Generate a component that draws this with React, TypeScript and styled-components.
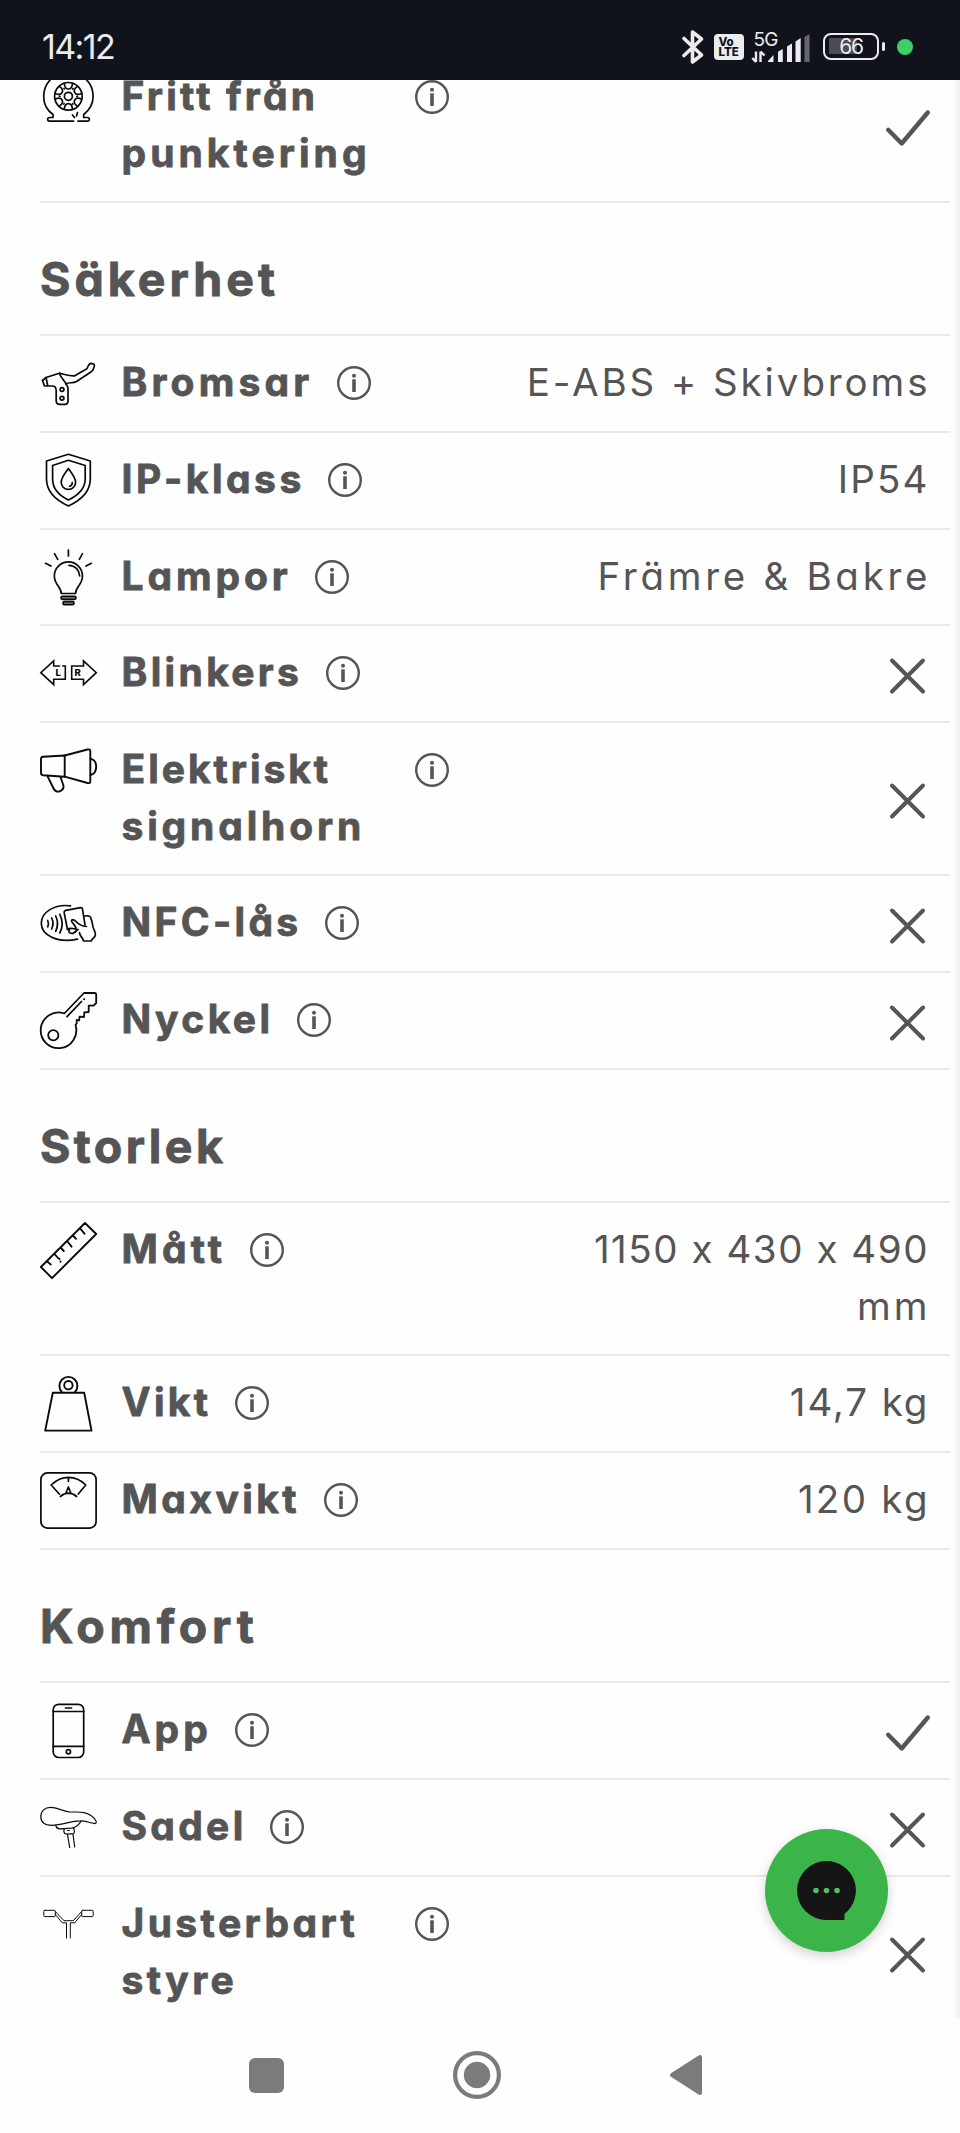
import React from "react";
import styled, { createGlobalStyle } from "styled-components";

const INK = "#555555";
const LINE = "#e9e9e9";
const PAGE = "#fefefe";

const GlobalStyle = createGlobalStyle`
  * { box-sizing: border-box; }
  body {
    margin: 0;
    background: ${PAGE};
    color: ${INK};
    font-family: Inter, "Liberation Sans", sans-serif;
    font-feature-settings: "cv11" 1, "calt" 0;
  }
  svg { display: block; flex: none; overflow: visible; }
`;

const Screen = styled.div`
  position: relative;
  display: flex;
  flex-direction: column;
  width: 960px;
  height: 2133px;
  overflow: hidden;
  background: ${PAGE};
`;

/* ---------- status bar ---------- */

const StatusBar = styled.header`
  flex: none;
  display: flex;
  align-items: center;
  justify-content: space-between;
  height: 80px;
  padding: 13px 47px 0 42px;
  background: #10131b;
  color: #ececee;
`;

const Clock = styled.span`
  font-size: 34px;
  line-height: 40px;
  letter-spacing: -1.6px;
`;

const StatusIcons = styled.div`
  display: flex;
  align-items: center;
`;

const VoLte = styled.div`
  display: flex;
  flex-direction: column;
  justify-content: center;
  width: 30px;
  height: 26px;
  margin: 1px 7px 0 10px;
  padding-left: 4.5px;
  border-radius: 4px;
  background: #ececee;
  color: #10131b;
  font-size: 11.5px;
  font-weight: 800;
  line-height: 10.5px;
`;

const BatteryShell = styled.div`
  display: flex;
  align-items: center;
  justify-content: center;
  width: 56px;
  height: 27px;
  margin-left: 12px;
  border: 2.5px solid #ececee;
  border-radius: 8px;
  background: linear-gradient(#4b4d53, #4b4d53) 4px 3px / 28px 16px no-repeat;
  font-size: 21px;
  font-weight: 400;
  line-height: 22px;
  letter-spacing: -1.2px;
`;

const BatteryTip = styled.div`
  width: 3.5px;
  height: 9px;
  margin-left: 2.5px;
  border-radius: 2px;
  background: #ececee;
`;

const PrivacyDot = styled.div`
  width: 16px;
  height: 16px;
  margin-left: 12px;
  border-radius: 50%;
  background: #3dd068;
`;

/* ---------- specification list ---------- */

const Page = styled.main`
  flex: 1;
  min-height: 0;
  overflow: hidden;
  padding: 0 10px 0 40px;
  background: linear-gradient(to right, rgba(0, 0, 0, 0), rgba(0, 0, 0, 0.055)) right / 9px 100% no-repeat;
`;

const Scrolled = styled.div`
  margin-top: -30px;
`;

const SectionTitle = styled.h2<{ $height: number; $tracking: number }>`
  display: flex;
  align-items: center;
  height: ${(p) => p.$height}px;
  margin: 0;
  padding: 21px 0 0 0;
  border-bottom: 2px solid ${LINE};
  font-size: 46.5px;
  font-weight: 700;
  letter-spacing: ${(p) => p.$tracking}px;
  -webkit-text-stroke: 0.9px ${INK};
`;

const SpecRow = styled.div<{ $height: number }>`
  display: flex;
  justify-content: space-between;
  height: ${(p) => p.$height}px;
  border-bottom: 2px solid ${LINE};
`;

const SpecName = styled.div`
  flex: none;
  display: flex;
  align-items: flex-start;
  width: 409px;
  padding-top: 19px;
`;

const Label = styled.span`
  margin: -2px 23.5px 0 24.5px;
  font-size: 39px;
  font-weight: 700;
  line-height: 57px;
  -webkit-text-stroke: 0.8px ${INK};
`;

const Tracked = styled.span<{ $tracking: number }>`
  letter-spacing: ${(p) => p.$tracking}px;
`;

const InfoButton = styled.span`
  flex: none;
  display: flex;
  align-items: center;
  height: 56px;
`;

const TextValue = styled.span`
  display: flex;
  flex-direction: column;
  align-items: flex-end;
  padding: 18px 22.5px 0 0;
  font-size: 38.5px;
  line-height: 57px;
  white-space: nowrap;
`;

const ValueLine = styled(Tracked)`
  margin-right: ${(p) => -p.$tracking}px;
`;

const MarkValue = styled.span<{ $inset: number }>`
  display: flex;
  align-items: center;
  padding-top: 4px;
  margin-right: ${(p) => p.$inset}px;
`;

/* ---------- overlays and navigation ---------- */

const ChatButton = styled.button`
  position: absolute;
  right: 72px;
  bottom: 181px;
  display: flex;
  align-items: center;
  justify-content: center;
  width: 123px;
  height: 123px;
  padding: 0;
  border: 0;
  border-radius: 50%;
  background: #3bb54a;
  box-shadow: 0 4px 12px rgba(0, 0, 0, 0.18);
`;

const NavBar = styled.nav`
  flex: none;
  display: flex;
  align-items: center;
  justify-content: space-between;
  height: 115px;
  padding: 0 257px 1px 249px;
  background: ${PAGE};
`;

/* ---------- drawings ---------- */

const Glyph = ({ children, weight = 1.7 }: { children: React.ReactNode; weight?: number }) => (
  <svg width="57" height="57" viewBox="0 0 57 57" fill="none" stroke="#0a0a0a" strokeWidth={weight} strokeLinecap="round" strokeLinejoin="round">
    {children}
  </svg>
);

const spokes = [0, 60, 120, 180, 240, 300];

const icons: Record<string, React.ReactNode> = {
  tire: (
    <Glyph>
      <path d="M13 45.5C6.500 41 3.700 34.500 3.700 27.500a24.700 24.700 0 0 1 49.400 0C53.100 34.500 49.500 41 43.700 45.500V48.500H47.500a1.800 1.800 0 0 1 0 3.700H38M13 45.500V48.500H9.500a1.800 1.800 0 0 0 0 3.700H33.500M32.500 46l2 2.500M37.500 43.500l-1 3.500" />
      <circle cx="28.400" cy="27.300" r="13.800" />
      <circle cx="28.400" cy="27.300" r="4" />
      {spokes.map((a) => (
        <g key={a} transform={`rotate(${a} 28.400 27.300)`}>
          <path d="M24.300 14.500c.3 3.500 1.500 5.500 4.100 5.500s3.800-2 4.100-5.500" />
          <path d="M32.700 20l.3-.5" />
        </g>
      ))}
    </Glyph>
  ),
  brake: (
    <Glyph>
      <path d="M2.500 25.500L6 22.500 19.300 18.200c5 1 10 3 15.500 2.600L46.500 14c1.800-1.600 1.500-5.500 4.500-5.700 3.500 0 3.900 1.700 3 4.200-.6 2.400-1.300 3.500-3.500 4.800L36.500 26.500c-3.500 2-7 .5-10.800 2.300" />
      <path d="M19.300 18.500c2 5 7.700 9.500 8.700 14.500V46c0 2.300-1 3.300-3 3.300H19.500c-2.300 0-3.300-1-3.300-3.300V35.500C16 32.500 15 31 12.500 31H4.500L2.500 25.500M6 22.500L7.800 31" />
      <circle cx="22" cy="34.500" r="1.900" />
      <circle cx="22" cy="43.300" r="1.900" />
    </Glyph>
  ),
  shield: (
    <Glyph>
      <path d="M28.400 2.300L50.300 9V27c0 13-9 21-21.900 27C15.500 48 6.500 40 6.500 27V9z" />
      <path d="M28.400 8.300L45.200 13.500V27c0 10-6.500 16-16.800 21C18 43 12.600 37 12.600 27V13.500z" />
      <path d="M28.400 16.500c-3 4.500-7.200 8.800-7.200 13.700a7.200 7.200 0 0 0 14.400 0c0-4.900-4.200-9.200-7.200-13.700zM32.300 30.500c0 2-1 3.300-2.800 3.800" />
    </Glyph>
  ),
  bulb: (
    <Glyph>
      <path d="M21.300 44.500C21.300 38 14.300 35.500 14.300 27a14.100 14.100 0 0 1 28.200 0c0 8.500-7 11-7 17.500z" />
      <path d="M29 16.300c6 .2 10.300 4.500 10.700 10.700" />
      <rect x="21" y="47.300" width="15" height="3" rx="1.500" fill="#888" />
      <rect x="23" y="52.700" width="11" height="3" rx="1.500" fill="#888" />
      <path d="M28.400 1v6M14.500 4.700l3.200 5.600M42.500 4.700l-3.200 5.600M5.500 14.300l5.500 2.700M51.300 14.300L46 17" />
    </Glyph>
  ),
  blinker: (
    <Glyph weight={1.6}>
      <path d="M19.500 21H13.700V15.800L.8 27.700l12.900 11.900V34.300H25.300V21H22.700" strokeLinejoin="miter" />
      <path d="M31.700 21H43.500V15.800L56.300 27.700 43.500 39.600V34.300H31.700z" strokeLinejoin="miter" />
      <text x="15.500" y="30.900" fontSize="9.500" fontWeight="800" fill="#0a0a0a" stroke="none">L</text>
      <text x="34.500" y="30.900" fontSize="9.500" fontWeight="800" fill="#0a0a0a" stroke="none">R</text>
    </Glyph>
  ),
  megaphone: (
    <Glyph weight={1.9}>
      <path d="M24.700 13.500L3 14.800C1.500 15 1 15.500 1 17V31c0 1.500.5 2 2 2.200L24.700 34.700z" />
      <path d="M24.700 13.500L47.500 7.500c2-.5 2.800 0 2.800 2V39c0 2-.8 2.500-2.800 2L24.700 34.700" />
      <path d="M50.500 16.700c3.500 1 5.700 4 5.700 8s-2.200 7.300-5.700 8.300M7.700 34.500L13.300 46c1.300 2.800 3.200 4 5.700 3.500 3.500-1 5-3.500 4.300-6.500L20.700 35.500" />
    </Glyph>
  ),
  nfc: (
    <Glyph>
      <path d="M30.500 10.800C14.500 9 1.300 17 1.300 28.300 1.300 40 17 48.500 37.500 44.200" />
      <path d="M7.700 25.500c.9 2 .9 4.300 0 6.300M11.700 23c1.600 3.300 1.600 7.500 0 11M15.700 21c2.200 4.500 2.200 10.500 0 15.300M19.800 19.300c3 6 3 13 0 18.700" />
      <path d="M27.500 34.500L24.200 17.800c-.2-1.500.3-2.200 1.600-2.500L40.500 12.600c1.300-.2 1.800.3 2 1.500L45 29.800" />
      <path d="M43.800 21.300c2.500-1 6-.5 6.800 1 1.500 3 1.700 6.500 2.500 10 .8 2.500 2.300 4.500 2.300 7.200 0 3-2.700 3.500-4.200 6.500H43.500c-.5-4-4-4.500-4-8.500M46.500 31.500c-5-.5-8-2-10.500-5-1.500-1.600-4-2.600-4.500-.8 0 2.300 5 4.500 4.500 8.800M27.500 34.500c2-2 5-1 8.500-.5M29.500 35c-2 3 2 4.500 6 2M33 38.500l5-4" />
    </Glyph>
  ),
  key: (
    <Glyph weight={1.8}>
      <path d="M24.300 21.500L44 1H54.500c1.300 0 1.700.5 1.700 1.700V11l-2.700 2.700H48.700V20l-4.400.3-.3 4.700-4.500-.3-.3 3.800L36.700 27.800V31.500L35.500 33A17.800 17.800 0 1 1 24.300 21.500z" />
      <circle cx="13.300" cy="43.200" r="5.100" />
      <path d="M27 24.700L41.500 9.500M44 7.200l.3-.2" />
    </Glyph>
  ),
  ruler: (
    <Glyph weight={1.9}>
      <path d="M45 1L56.200 12 12 56.200.9 45zM40.200 6.500l4.300 5.200M33 13.500l3 3.300M27.500 19.500l4 5.200M21 26l2.800 3M15 32.500l3 3.500 1.500 1M20.500 39.500v.2M7.800 40l3 2.500" />
    </Glyph>
  ),
  weight: (
    <Glyph weight={1.9}>
      <path d="M12.800 17.700H44.200L51.500 55.600H5.200zM22 17.200a9 9 0 1 1 12.800 0" />
      <circle cx="28.400" cy="10.200" r="4.200" />
    </Glyph>
  ),
  scale: (
    <Glyph>
      <rect x=".9" y=".9" width="55.200" height="55.200" rx="6.500" />
      <path d="M19.300 22L11.200 13C21.500 2.800 35.500 2.800 45.800 13L38.300 22M28.400 5.500v3.800M20.300 24.500c5-4.500 11.400-4.500 16.300 0M25.700 21.500l2.700-6.500 2.700 6.500z" />
    </Glyph>
  ),
  phone: (
    <Glyph>
      <rect x="13.200" y="2.300" width="30.500" height="53.200" rx="5.500" />
      <path d="M13.200 9.500H43.700M13.200 44.300H43.700M25.500 6h6" />
      <circle cx="28.400" cy="49.800" r="2.100" />
    </Glyph>
  ),
  saddle: (
    <Glyph weight={1.2}>
      <path d="M.8 17.500C.8 12 5 8.400 10.500 8.400 17 8.500 22.500 12 29 12.800c5.500.5 10-.3 15 .8 6 1.500 10.500 5 12.200 8.800.3 1.300-.5 2.500-2 2-5-.8-9-2.800-14-2.500C30.500 22 21 26.400 12 26.300 5 26.200.8 23 .8 17.500z" />
      <path d="M15.700 26.500c.5 2 1.800 3.200 4 3.400l12-.7C37 28 39.500 25 41 22.300M24.300 29.700l-.5 3c.3 1.700 1 2.200 2.500 2.300l7-.4c1-.3 1.200-1 1.200-2l-.8-4M27.500 35.500l2.200 13M33 35.500l1.700 12.500M29.500 31.500h-2" />
    </Glyph>
  ),
  handlebar: (
    <Glyph weight={1}>
      <rect x="3.800" y="14.300" width="11.500" height="6.300" rx="1" />
      <rect x="41.700" y="14.300" width="11.500" height="6.300" rx="1" />
      <path d="M15.300 15.500L24 24.700H33.300L41.700 15.500M15.300 18.500L22.300 26.800H26.500V42M41.700 18.500L34.700 26.800H30.300V42" />
    </Glyph>
  ),
};

const InfoIcon = () => (
  <svg width="34" height="34" viewBox="0 0 34 34" fill="none">
    <circle cx="17" cy="17" r="15.800" stroke={INK} strokeWidth="2.400" />
    <circle cx="17" cy="9.700" r="2" fill={INK} />
    <path d="M17 13.300V26" stroke={INK} strokeWidth="3.600" />
  </svg>
);

const Cross = () => (
  <svg width="35" height="36" viewBox="0 0 35 36" fill="none" stroke={INK} strokeWidth="4" strokeLinecap="round">
    <path d="M2 2.500L33 33.500M33 2.500L2 33.500" />
  </svg>
);

const Check = () => (
  <svg width="44" height="36" viewBox="0 0 44 36" fill="none" stroke={INK} strokeWidth="4.400" strokeLinecap="round" strokeLinejoin="round">
    <path d="M2.200 19.800L15.700 33.500 41.800 2.500" />
  </svg>
);

const Bluetooth = () => (
  <svg width="22" height="34" viewBox="0 0 22 34" fill="none" stroke="#ececee" strokeWidth="3.600" strokeLinecap="round" strokeLinejoin="round">
    <path d="M2 8.500L19.500 25 10.500 32V2L19.500 9 2 25.500" />
  </svg>
);

const Signal = () => (
  <svg width="60" height="34" viewBox="0 0 60 34" fill="#ececee">
    <text x="2.500" y="15.500" fontSize="19" letterSpacing="-.8">5G</text>
    <path d="M5 32V21.500M5 32L1.300 28M9.500 21.500V32M9.500 21.500L13.500 25.500" stroke="#ececee" strokeWidth="2.400" fill="none" />
    <path d="M17 31L22.500 25V32H17zM27 21.800L31.800 19V32H27zM36 16.500L41 13.500V32H36zM44.500 11.500L49.700 8V32H44.500z" />
    <path d="M53.500 7L58.500 4V32H53.500z" fill="#66686d" />
  </svg>
);

const ChatBubble = () => (
  <svg width="59" height="60" viewBox="0 0 59 60">
    <path d="M29.500 0a29.500 29.500 0 0 1 18 52.800V59H29.500a29.500 29.500 0 0 1 0-59z" fill="#151515" />
    <g fill="#55bd62">
      <circle cx="19" cy="29.500" r="2.800" />
      <circle cx="29.500" cy="29.500" r="2.800" />
      <circle cx="40" cy="29.500" r="2.800" />
    </g>
  </svg>
);

const RecentsIcon = () => (
  <svg width="35" height="35" viewBox="0 0 35 35">
    <rect width="35" height="35" rx="6" fill="#7b7b7b" />
  </svg>
);

const HomeIcon = () => (
  <svg width="48" height="48" viewBox="0 0 48 48">
    <circle cx="24" cy="24" r="21.900" fill="none" stroke="#7b7b7b" strokeWidth="4.200" />
    <circle cx="24" cy="24" r="13.200" fill="#7b7b7b" />
  </svg>
);

const BackIcon = () => (
  <svg width="34" height="42" viewBox="0 0 34 42">
    <path d="M3 21L31 3V39z" fill="#7b7b7b" stroke="#7b7b7b" strokeWidth="4" strokeLinejoin="round" />
  </svg>
);

/* ---------- data ---------- */

type Run = [text: string, tracking: number];
type Spec = { icon: string; label: Run[]; height: number; value: Run[] | "yes" | "no" };
type Section = { title?: string; tracking?: number; height?: number; specs: Spec[] };

const sections: Section[] = [
  {
    specs: [{ icon: "tire", label: [["Fritt från", 3.22], ["punktering", 4.06]], height: 153, value: "yes" }],
  },
  {
    title: "Säkerhet",
    tracking: 4.04,
    height: 133,
    specs: [
      { icon: "brake", label: [["Bromsar", 4.19]], height: 97, value: [["E-ABS + Skivbroms", 2.88]] },
      { icon: "shield", label: [["IP-klass", 3.53]], height: 97, value: [["IP54", 2.22]] },
      { icon: "bulb", label: [["Lampor", 3.91]], height: 96, value: [["Främre & Bakre", 3.71]] },
      { icon: "blinker", label: [["Blinkers", 3.36]], height: 97, value: "no" },
      { icon: "megaphone", label: [["Elektriskt", 2.97], ["signalhorn", 3.85]], height: 153, value: "no" },
      { icon: "nfc", label: [["NFC-lås", 3.32]], height: 97, value: "no" },
      { icon: "key", label: [["Nyckel", 3.43]], height: 97, value: "no" },
    ],
  },
  {
    title: "Storlek",
    tracking: 3.41,
    height: 133,
    specs: [
      { icon: "ruler", label: [["Mått", 4.15]], height: 153, value: [["1150 x 430 x 490", 1.55], ["mm", 3]] },
      { icon: "weight", label: [["Vikt", 3.3]], height: 97, value: [["14,7 kg", 1.89]] },
      { icon: "scale", label: [["Maxvikt", 3.45]], height: 97, value: [["120 kg", 2.29]] },
    ],
  },
  {
    title: "Komfort",
    tracking: 4.7,
    height: 133,
    specs: [
      { icon: "phone", label: [["App", 3.99]], height: 97, value: "yes" },
      { icon: "saddle", label: [["Sadel", 3.3]], height: 97, value: "no" },
      { icon: "handlebar", label: [["Justerbart", 3.4], ["styre", 3.4]], height: 153, value: "no" },
    ],
  },
];

const SpecLine = ({ spec }: { spec: Spec }) => (
  <SpecRow $height={spec.height}>
    <SpecName>
      {icons[spec.icon]}
      <Label>
        {spec.label.map(([text, tracking], i) => (
          <React.Fragment key={text}>
            {i > 0 && " "}
            <Tracked $tracking={tracking}>{text}</Tracked>
          </React.Fragment>
        ))}
      </Label>
      <InfoButton>
        <InfoIcon />
      </InfoButton>
    </SpecName>
    {spec.value === "yes" && (
      <MarkValue $inset={20.5}>
        <Check />
      </MarkValue>
    )}
    {spec.value === "no" && (
      <MarkValue $inset={25}>
        <Cross />
      </MarkValue>
    )}
    {Array.isArray(spec.value) && (
      <TextValue>
        {spec.value.map(([text, tracking]) => (
          <ValueLine key={text} $tracking={tracking}>
            {text}
          </ValueLine>
        ))}
      </TextValue>
    )}
  </SpecRow>
);

export default function App() {
  return (
    <Screen>
      <GlobalStyle />
      <StatusBar>
        <Clock>14:12</Clock>
        <StatusIcons>
          <Bluetooth />
          <VoLte>
            <span>Vo</span>
            <span>LTE</span>
          </VoLte>
          <Signal />
          <BatteryShell>66</BatteryShell>
          <BatteryTip />
          <PrivacyDot />
        </StatusIcons>
      </StatusBar>
      <Page>
        <Scrolled>
          {sections.map((section, i) => (
            <section key={i}>
              {section.title && (
                <SectionTitle $height={section.height!} $tracking={section.tracking!}>
                  {section.title}
                </SectionTitle>
              )}
              {section.specs.map((spec) => (
                <SpecLine key={spec.icon} spec={spec} />
              ))}
            </section>
          ))}
        </Scrolled>
      </Page>
      <NavBar>
        <RecentsIcon />
        <HomeIcon />
        <BackIcon />
      </NavBar>
      <ChatButton aria-label="Chatt">
        <ChatBubble />
      </ChatButton>
    </Screen>
  );
}
